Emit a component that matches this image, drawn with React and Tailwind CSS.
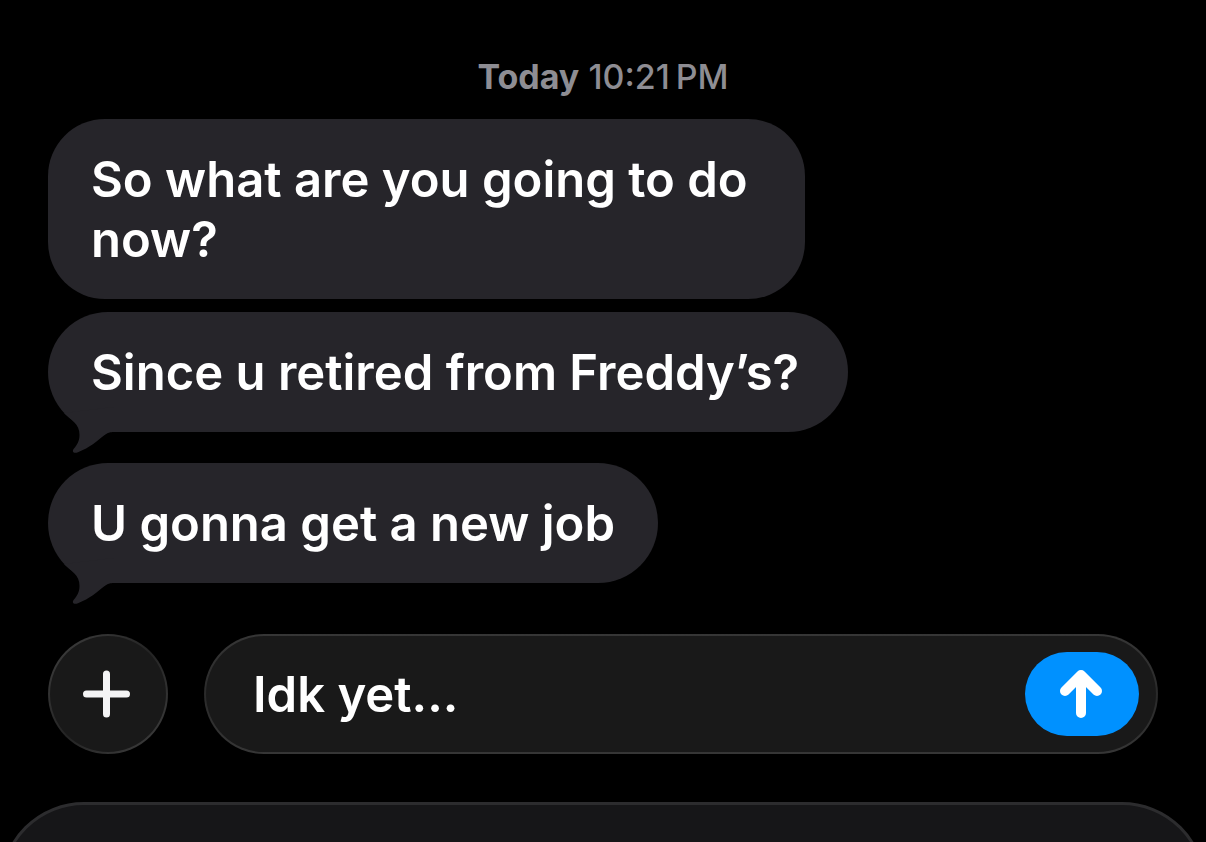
import { useState } from 'react'

const messages = [
  { id: 1, text: 'So what are you going to do now?', shape: 'max-w-[757px] rounded-[57px] mb-[13px]' },
  { id: 2, text: 'Since u retired from Freddy’s?', shape: 'min-w-[800px] rounded-[60px] mb-[31px]', tail: true },
  { id: 3, text: 'U gonna get a new job', shape: 'rounded-[60px] mb-[31px]', tail: true },
]

function Tail() {
  return (
    <svg
      className="absolute left-0 bottom-[-22px] text-[#26252a]"
      width="70"
      height="52"
      viewBox="0 0 70 52"
      fill="currentColor"
      aria-hidden="true"
    >
      <path d="M16 11C22 17 32 22 31.5 33C31.5 39 29 43 26 46.500C23.500 49.500 25.500 52 30 50.200C42 45.500 49 39 56 33.500C60 30.500 62 30 66 30V5Z" />
    </svg>
  )
}

function Bubble({ text, shape, tail }) {
  return (
    <li
      className={`relative w-fit bg-[#26252a] px-[43px] pt-[31px] pb-[29px] text-[49px] leading-[60px] font-semibold text-white ${shape}`}
    >
      {text}
      {tail && <Tail />}
    </li>
  )
}

function Composer() {
  const [draft, setDraft] = useState('Idk yet...')

  return (
    <form onSubmit={(e) => e.preventDefault()} className="flex items-center gap-9 px-12 pt-5">
      <button
        type="button"
        aria-label="Add attachment"
        className="flex size-[120px] shrink-0 items-center justify-center rounded-full border-2 border-transparent [background:linear-gradient(#191919,#191919)_padding-box,linear-gradient(135deg,#404040,#242424,#404040)_border-box]"
      >
        <svg
          className="overflow-visible"
          width="48"
          height="48"
          viewBox="0 0 48 48"
          fill="none"
          stroke="#f4f4f5"
          strokeWidth="7"
          strokeLinecap="round"
        >
          <path d="M22.500 4v40M2.500 24h40" />
        </svg>
      </button>
      <div className="flex h-[120px] min-w-0 flex-1 items-center rounded-full border-2 border-transparent pr-[17px] pl-[47px] [background:linear-gradient(#191919,#191919)_padding-box,linear-gradient(#363636,#2a2a2a,#363636)_border-box]">
        <input
          type="text"
          aria-label="Message"
          value={draft}
          onChange={(e) => setDraft(e.target.value)}
          className="min-w-0 flex-1 bg-transparent pt-0.5 text-[49px] leading-[60px] font-semibold text-white outline-none"
        />
        <button
          type="submit"
          aria-label="Send"
          className="flex h-[84px] w-[114px] shrink-0 items-center justify-center rounded-full bg-[#0091ff]"
        >
          <svg
            width="50"
            height="50"
            viewBox="0 0 50 50"
            fill="none"
            stroke="white"
            strokeWidth="10"
            strokeLinecap="round"
            strokeLinejoin="round"
          >
            <path d="M24 6v38M8 22L24 6L40 22" />
          </svg>
        </button>
      </div>
    </form>
  )
}

export default function App() {
  return (
    <main className="flex h-screen flex-col overflow-hidden bg-black font-['Inter',sans-serif]">
      <p className="pt-[57px] text-center text-[34px] leading-10 font-medium text-[#8e8d93]">
        <span className="font-bold">Today</span> 10:21{'\u202f'}PM
      </p>
      <ul className="px-12 pt-[22px]">
        {messages.map((m) => (
          <Bubble key={m.id} text={m.text} shape={m.shape} tail={m.tail} />
        ))}
      </ul>
      <Composer />
      {/* top edge of the keyboard */}
      <div className="mt-12 min-h-0 flex-1 overflow-hidden">
        <div className="h-60 rounded-t-[84px] border-[3px] border-[#2c2c2e] bg-[#161618]" />
      </div>
    </main>
  )
}
